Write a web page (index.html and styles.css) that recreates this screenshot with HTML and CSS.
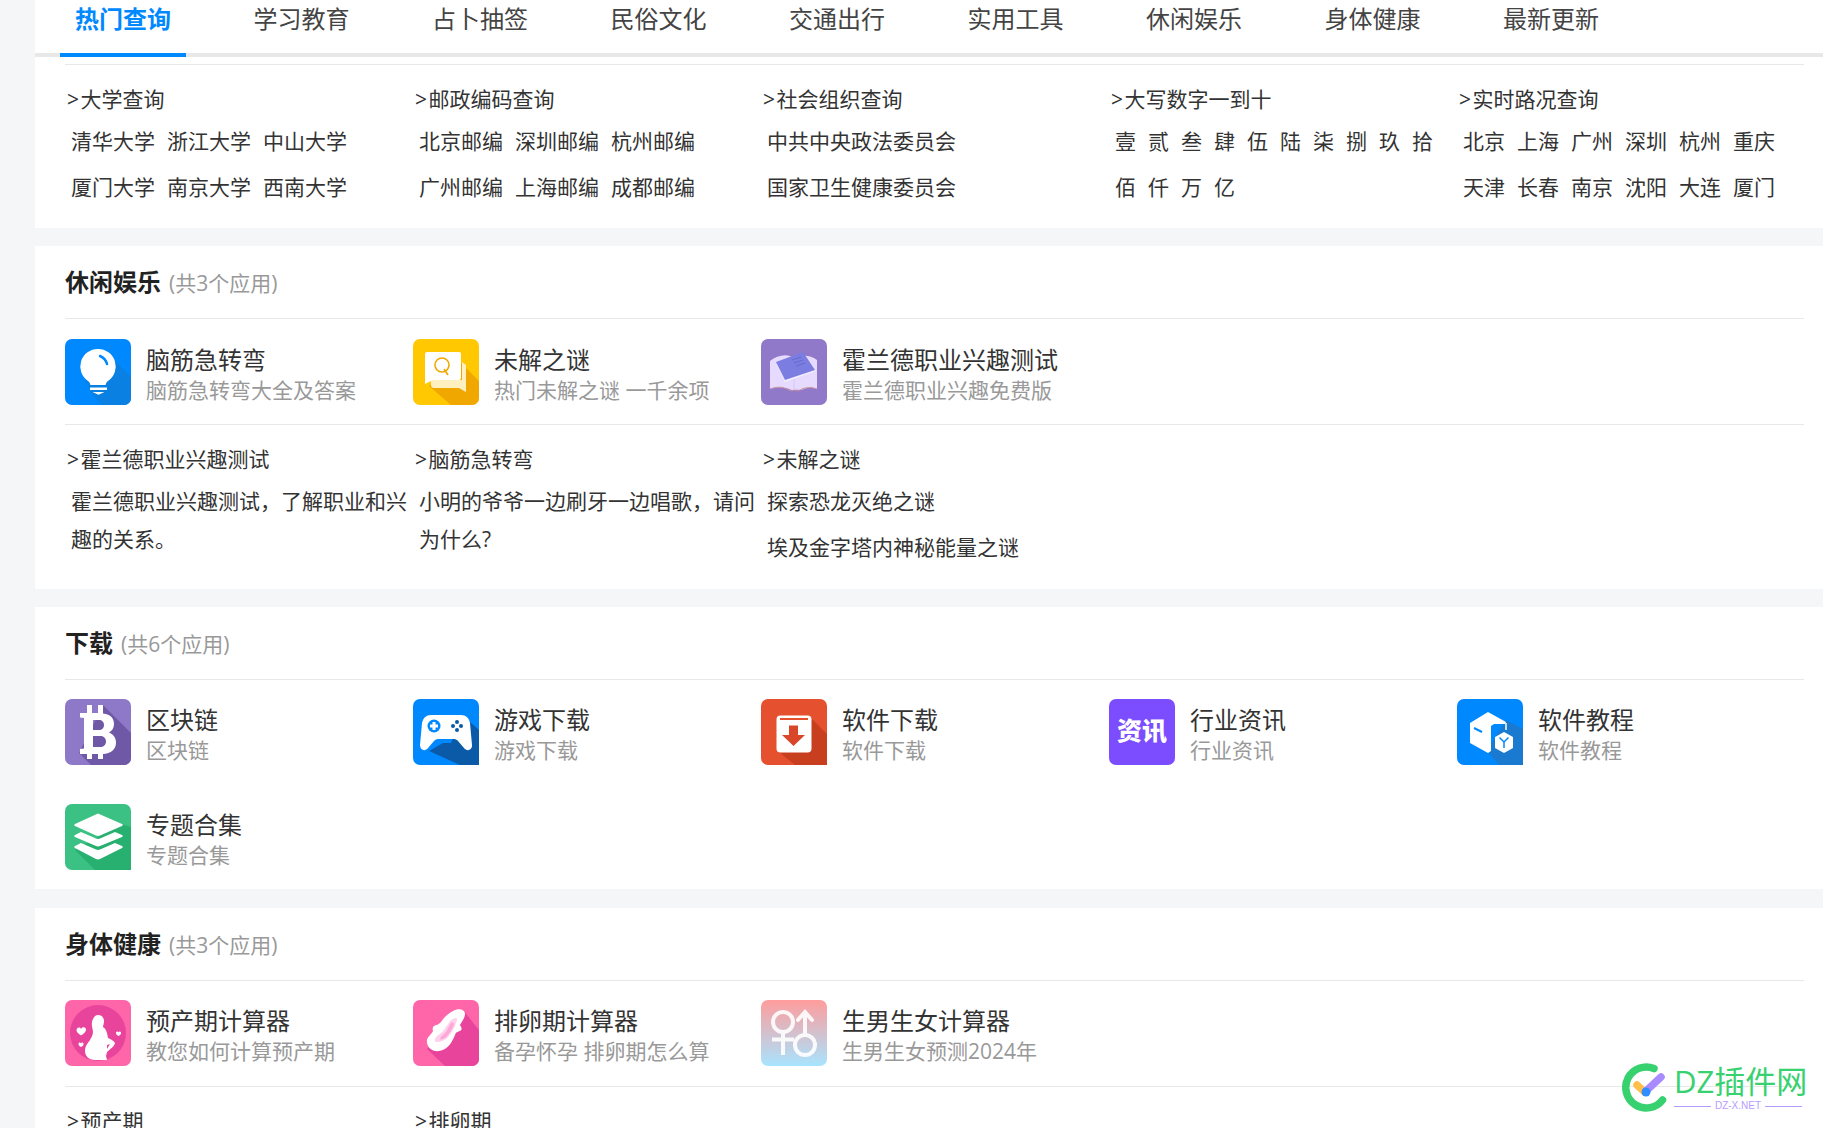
FILE: index.html
```html
<!DOCTYPE html>
<html lang="zh-CN">
<head>
<meta charset="utf-8">
<title>应用大全</title>
<link rel="stylesheet" href="styles.css">
</head>
<body>
<main class="page">
  <nav class="tabs">
    <a class="tab active">热门查询</a><a class="tab">学习教育</a><a class="tab">占卜抽签</a><a class="tab">民俗文化</a><a class="tab">交通出行</a><a class="tab">实用工具</a><a class="tab">休闲娱乐</a><a class="tab">身体健康</a><a class="tab">最新更新</a>
  </nav>

  <section class="panel first">
    <div class="links">
      <div class="col"><h4>&gt;大学查询</h4>
        <div class="row"><a>清华大学</a><a>浙江大学</a><a>中山大学</a></div>
        <div class="row"><a>厦门大学</a><a>南京大学</a><a>西南大学</a></div></div>
      <div class="col"><h4>&gt;邮政编码查询</h4>
        <div class="row"><a>北京邮编</a><a>深圳邮编</a><a>杭州邮编</a></div>
        <div class="row"><a>广州邮编</a><a>上海邮编</a><a>成都邮编</a></div></div>
      <div class="col"><h4>&gt;社会组织查询</h4>
        <div class="row"><a>中共中央政法委员会</a></div>
        <div class="row"><a>国家卫生健康委员会</a></div></div>
      <div class="col"><h4>&gt;大写数字一到十</h4>
        <div class="row"><a>壹</a><a>贰</a><a>叁</a><a>肆</a><a>伍</a><a>陆</a><a>柒</a><a>捌</a><a>玖</a><a>拾</a></div>
        <div class="row"><a>佰</a><a>仟</a><a>万</a><a>亿</a></div></div>
      <div class="col"><h4>&gt;实时路况查询</h4>
        <div class="row"><a>北京</a><a>上海</a><a>广州</a><a>深圳</a><a>杭州</a><a>重庆</a></div>
        <div class="row"><a>天津</a><a>长春</a><a>南京</a><a>沈阳</a><a>大连</a><a>厦门</a></div></div>
    </div>
  </section>

  <section class="panel fun">
    <header class="head"><h3>休闲娱乐</h3><span>(共3个应用)</span></header>
    <div class="apps">
      <div class="app">
        <svg class="icon" viewBox="0 0 66 66"><rect width="66" height="66" rx="7" fill="#0088ff"/><path d="M44 16 66 38V59a7 7 0 0 1-7 7H37L26 54 20 40z" fill="#0a80e2"/><path d="M33 10a17.500 17.500 0 0 0-10 32c2 1.500 2 3 2.500 4h15c.5-1 .5-2.500 2.500-4a17.500 17.500 0 0 0-10-32z" fill="#fff"/><path d="M25 48.500h17v2.500H25zM27.500 53h12l-6 2.800z" fill="#fff"/><path d="M35 17a12 12 0 0 1 7 8" fill="none" stroke="#0088ff" stroke-width="2.500" stroke-linecap="round"/></svg>
        <div class="info"><b>脑筋急转弯</b><small>脑筋急转弯大全及答案</small></div>
      </div>
      <div class="app">
        <svg class="icon" viewBox="0 0 66 66"><rect width="66" height="66" rx="7" fill="#ffc800"/><path d="M48 24 66 42V59a7 7 0 0 1-7 7H38L16 47z" fill="#f0a800"/><path d="M18 41h31V23l4 3v27l-7-4H21a3 3 0 0 1-3-3z" fill="#fff0c0"/><path d="M14 13h32a2 2 0 0 1 2 2v24a2 2 0 0 1-2 2H20l-8 4V15a2 2 0 0 1 2-2z" fill="#fff"/><circle cx="29" cy="26" r="7" fill="none" stroke="#f0a800" stroke-width="1.600"/><path d="M31 30l4 6" stroke="#f0a800" stroke-width="1.600"/></svg>
        <div class="info"><b>未解之谜</b><small>热门未解之谜 一千余项</small></div>
      </div>
      <div class="app">
        <svg class="icon" viewBox="0 0 66 66"><rect width="66" height="66" rx="7" fill="#9079c8"/><path d="M9 22c6-5 14-7 20-5 2 1 3 2 4 3 6-4 15-5 23 1v29c-5-2-9-2-13 0-2 1-3 1-5 1-2-.5-3-.5-5 0-2 0-3 0-5-1-5-2-12-2-19 0z" fill="#e6daff"/><path d="M9 50c6-2.500 13-2.500 19 1 3 1 3 1 5 0 3 1 4 1 6 0 5-3 12-3 17-1" fill="none" stroke="#c98f9f" stroke-width="1"/><path d="M33 22v28" stroke="#d3c4f0" stroke-width=".8"/><path d="M16 26 43 16l12 16-31 11z" fill="#f3eefc"/><path d="M15 23 42 13l12 18-30 10z" fill="#7b7ee0"/><path d="M31 21l9-3M33 24l9-3M35 27l9-3" stroke="#5f62c4" stroke-width=".7"/></svg>
        <div class="info"><b>霍兰德职业兴趣测试</b><small>霍兰德职业兴趣免费版</small></div>
      </div>
    </div>
    <div class="links">
      <div class="col"><h4>&gt;霍兰德职业兴趣测试</h4><div class="row"><a>霍兰德职业兴趣测试，了解职业和兴趣的关系。</a></div></div>
      <div class="col"><h4>&gt;脑筋急转弯</h4><div class="row"><a>小明的爷爷一边刷牙一边唱歌，请问为什么?</a></div></div>
      <div class="col"><h4>&gt;未解之谜</h4><div class="row"><a>探索恐龙灭绝之谜</a></div><div class="row"><a>埃及金字塔内神秘能量之谜</a></div></div>
    </div>
  </section>

  <section class="panel dl">
    <header class="head"><h3>下载</h3><span>(共6个应用)</span></header>
    <div class="apps">
      <div class="app">
        <svg class="icon" viewBox="0 0 66 66"><rect width="66" height="66" rx="7" fill="#8e78c8"/><path d="M38 6 66 34V59a7 7 0 0 1-7 7H26L14 54z" fill="#6f58a5"/><path fill-rule="evenodd" d="M22 6h5v8h6V6h5v8.500c8 1 11 5 11 10.500 0 4-2 7-5 8.500 4 1.500 7 5 7 10 0 7-5 11-13 11.500V60h-5v-5h-6v5h-5v-5H15v-5l4-.5V19l-4-.5V14h7zM28 21v10h6c3 0 5-2 5-5s-2-5-5-5zM28 37v11h7c3.500 0 6-2 6-5.500s-2.500-5.500-6-5.500z" fill="#fff"/></svg>
        <div class="info"><b>区块链</b><small>区块链</small></div>
      </div>
      <div class="app">
        <svg class="icon" viewBox="0 0 66 66"><rect width="66" height="66" rx="7" fill="#0088ff"/><path d="M50 17 66 31V66H47L16 52l14-8h8z" fill="#0a5aa8"/><path d="M18 16h30c5 0 8 3 9 8l2 22c.3 5-5 7-8 3l-6-7c-1-1-2-2-4-2H25c-2 0-3 1-4 2l-6 7c-3 4-8 2-8-3l2-22c1-5 4-8 9-8z" fill="#fff"/><circle cx="21" cy="27" r="6.500" fill="#0088ff"/><path d="M19.500 23h3v2.500H25v3h-2.500V31h-3v-2.500H17v-3h2.500z" fill="#fff"/><g fill="#0a5aa8"><circle cx="44" cy="23" r="2"/><circle cx="44" cy="31" r="2"/><circle cx="40" cy="27" r="2"/><circle cx="48" cy="27" r="2"/></g></svg>
        <div class="info"><b>游戏下载</b><small>游戏下载</small></div>
      </div>
      <div class="app">
        <svg class="icon" viewBox="0 0 66 66"><rect width="66" height="66" rx="7" fill="#e5502f"/><path d="M51 20 66 35V66H34L18 53z" fill="#c83f20"/><rect x="15.500" y="16.500" width="35" height="37" rx="4" fill="#fff"/><rect x="19" y="19" width="28" height="2" fill="#e5502f"/><path d="M28 26.500h9V36h7L32.500 47 21 36h7z" fill="#d9472a"/></svg>
        <div class="info"><b>软件下载</b><small>软件下载</small></div>
      </div>
      <div class="app">
        <svg class="icon" viewBox="0 0 66 66"><rect width="66" height="66" rx="7" fill="#7c4dff"/><text x="33" y="41" class="zixun" text-anchor="middle">资讯</text></svg>
        <div class="info"><b>行业资讯</b><small>行业资讯</small></div>
      </div>
      <div class="app">
        <svg class="icon" viewBox="0 0 66 66"><rect width="66" height="66" rx="7" fill="#0088ff"/><path d="M49 21 66 30V66H42L30 52z" fill="#1a7ad0"/><path d="M13 24 31 13l18 10-1 2-11 0-3 2v25l-3 2-18-10z" fill="#fff"/><path d="M17 29l8 4" stroke="#0088ff" stroke-width="2"/><path d="M38 38l9-5 9 5v11l-9 5-9-5z" fill="#fff"/><path d="M42.500 38.500 47 43l4.500-4.500M47 43v6" fill="none" stroke="#0088ff" stroke-width="1.500"/><path d="M49 24v7" stroke="#fff" stroke-width="1.500"/></svg>
        <div class="info"><b>软件教程</b><small>软件教程</small></div>
      </div>
      <div class="app">
        <svg class="icon" viewBox="0 0 66 66"><rect width="66" height="66" rx="7" fill="#3ac183"/><path d="M56 20 66 23V66H30L10 46z" fill="#28b070"/><path d="M33 9.500 57 20c1 .5 1 1.500 0 2L35 31.500c-1.300.6-2.700.6-4 0L10 22c-1-.5-1-1.500 0-2z" fill="#fff"/><path d="M16 28l15 6.500c1.300.6 2.700.6 4 0L50 28l7 3c1 .5 1 1.500 0 2L35 42c-1.300.6-2.700.6-4 0L10 33c-1-.5-1-1.500 0-2z" fill="#fff"/><path d="M16 39l15 6.500c1.300.6 2.700.6 4 0L50 39l7 3c1 .5 1 1.500 0 2L35 55c-1.300.6-2.700.6-4 0L10 44c-1-.5-1-1.500 0-2z" fill="#fff"/></svg>
        <div class="info"><b>专题合集</b><small>专题合集</small></div>
      </div>
    </div>
  </section>

  <section class="panel health">
    <header class="head"><h3>身体健康</h3><span>(共3个应用)</span></header>
    <div class="apps">
      <div class="app">
        <svg class="icon" viewBox="0 0 66 66"><rect width="66" height="66" rx="7" fill="#ff66aa"/><circle cx="33" cy="33" r="28" fill="#e8449c"/><path d="M33 15c4 0 6 3 6 6 0 3-1 4-1 6 2 1 3 3 4 6l1 5c3 1 6 3 7 5 0 2-4 6-8 9l-1 4 1 4H30c-6 0-10-4-10-9 0-5 3-8 5-11 1-2 3-5 3-8 0-2-1-4-1-6-1-5 2-11 6-11z" fill="#fff"/><path d="M42 45l3-1-3 5z" fill="#e8449c"/><g fill="#fff"><path d="M16 35.500c-3-2-4.500-3.500-4.500-5.500 0-2.500 3.500-3.500 4.500-1 1-2.500 5-2 5 .5 0 2.500-2 4-5 6z"/><path d="M16 47c-2-1-2.500-2-2.500-3 0-1.500 2-2 2.500-.5.500-1.500 2.500-1 2.500.5 0 1-.5 2-2.500 3z"/><path d="M53.500 36c-2-1-2.500-2-2.500-3 0-1.500 2-2 2.500-.5.500-1.500 2.500-1 2.500.5 0 1-.5 2-2.500 3z"/></g></svg>
        <div class="info"><b>预产期计算器</b><small>教您如何计算预产期</small></div>
      </div>
      <div class="app">
        <svg class="icon" viewBox="0 0 66 66"><rect width="66" height="66" rx="7" fill="#ff66aa"/><path d="M50 10 66 30V59a7 7 0 0 1-7 7H32L14 49z" fill="#e8449c"/><path d="M40 11c5-3 12-2 12 3 0 4-3 7-5 11 1 2 3 4 0 6-3 1-4 1-5 4-3 7-7 15-16 16-7 1-13-4-12-11 1-4 5-6 6-9-1-3 0-5 3-6 2 0 3-1 5-3 3-5 7-8 12-11z" fill="#fff"/><path d="M38 20c3-2 7-3 6 0-1 5-6 15-11 19-4 3-10 4-11 2-1-3 3-6 6-8 4-3 7-10 10-13z" fill="#ffd2ec"/><path d="M38 23c2-1 3 0 3 1-1 4-5 11-9 14-2 1-5 2-5 1 0-2 3-4 5-6 3-3 4-8 6-10z" fill="#ffa6d8"/></svg>
        <div class="info"><b>排卵期计算器</b><small>备孕怀孕 排卵期怎么算</small></div>
      </div>
      <div class="app">
        <svg class="icon" viewBox="0 0 66 66"><defs><linearGradient id="sex" x1="0" y1="0" x2="0" y2="1"><stop offset="0" stop-color="#ff9c9c"/><stop offset="1" stop-color="#a8e4ff"/></linearGradient></defs><rect width="66" height="66" rx="7" fill="url(#sex)"/><g fill="none" stroke="#fff" stroke-width="4" opacity=".9"><circle cx="22" cy="22" r="10"/><path d="M22 32v23M11 39.500h22"/><circle cx="44" cy="45" r="10"/><path d="M44 35V12M37 20l7-8 7 8" stroke-linecap="round"/></g></svg>
        <div class="info"><b>生男生女计算器</b><small>生男生女预测2024年</small></div>
      </div>
    </div>
    <div class="links">
      <div class="col"><h4>&gt;预产期</h4></div>
      <div class="col"><h4>&gt;排卵期</h4></div>
    </div>
  </section>
</main>

<aside class="mark">
  <svg class="mark-icon" viewBox="0 0 50 50"><path d="M34 5.500A20.500 20.500 0 1 0 42.500 37" fill="none" stroke="#37d16f" stroke-width="7.500" stroke-linecap="round"/><path d="M17 22l7 6.500" stroke="#ffbf4d" stroke-width="7.500" stroke-linecap="round"/><path d="M26 28 41 14" stroke="#a98bff" stroke-width="7.500" stroke-linecap="round"/><circle cx="26" cy="29" r="4.500" fill="#2f8dff"/></svg>
  <div class="mark-text"><strong>DZ插件网</strong><em>DZ-X.NET</em></div>
</aside>
</body>
</html>
```
FILE: styles.css
```css
* { box-sizing: border-box; }
html, body { margin: 0; height: 100%; }
body {
  height: 1128px;
  overflow: hidden;
  background: #f5f6f8;
  font-family: "Open Sans", "Noto Sans CJK SC", sans-serif;
  color: #333;
  position: relative;
}
.page { margin-left: 35px; }
.tabs {
  display: flex;
  height: 57px;
  padding-left: 25px;
  background: #fff;
  border-bottom: 4px solid #e8e8e8;
}
.tab {
  flex: none;
  width: 126px;
  height: 57px;
  margin-right: 52.5px;
  font-size: 24px;
  line-height: 37px;
  text-align: center;
  color: #444;
}
.tab.active {
  color: #0088ff;
  font-weight: 700;
  border-bottom: 4px solid #0088ff;
}
.panel {
  background: #fff;
  margin-bottom: 18px;
  padding: 0 19px 0 30px;
}
.panel.first { padding-top: 7px; }
.panel.dl { margin-bottom: 19px; }
.head {
  display: flex;
  align-items: baseline;
  gap: 8px;
  height: 73px;
  padding-top: 18px;
  border-bottom: 1px solid #e8e8e8;
}
.head h3 { margin: 0; font-size: 24px; line-height: 36px; font-weight: 700; color: #222; }
.head span { font-size: 21px; color: #999; }
.apps {
  display: grid;
  grid-template-columns: repeat(5, 348px);
  row-gap: 39px;
  padding: 19px 0;
}
.fun .apps { padding-top: 20px; }
.health .apps { padding-bottom: 20px; }
.app { display: flex; gap: 15px; height: 66px; }
.icon { flex: none; width: 66px; height: 66px; display: block; }
.info { display: flex; flex-direction: column; padding-top: 6px; white-space: nowrap; }
.info b { font-size: 24px; line-height: 30px; font-weight: 400; color: #333; }
.info small { font-size: 21px; line-height: 30px; color: #999; }
.zixun { font-size: 25px; font-weight: 900; fill: #fff; }
.links {
  display: grid;
  grid-template-columns: repeat(5, 348px);
  border-top: 1px solid #e8e8e8;
  padding: 15px 0 15px;
}
.first .links { padding-bottom: 14px; }
.col { padding-right: 5px; }
.col h4 {
  margin: 0 0 4px 2px;
  font-size: 21px;
  line-height: 38px;
  font-weight: 400;
  color: #333;
}
.col h4::first-letter { margin-right: 1.5px; }
.row {
  display: flex;
  gap: 12px;
  padding-left: 6px;
  margin-bottom: 8px;
  font-size: 21px;
  line-height: 38px;
  color: #333;
}
.mark {
  position: absolute;
  left: 1620px;
  top: 1062px;
  display: flex;
  gap: 4px;
}
.mark-icon { width: 50px; height: 50px; display: block; margin-top: 1px; }
.mark-text { display: flex; flex-direction: column; width: 128px; }
.mark-text strong {
  font-size: 31px;
  line-height: 38px;
  font-weight: 400;
  color: #37d16f;
  white-space: nowrap;
}
.mark-text em {
  display: flex;
  align-items: center;
  gap: 4px;
  font-family: "Liberation Sans", sans-serif;
  font-style: normal;
  font-size: 10px;
  line-height: 12px;
  color: #b79cff;
}
.mark-text em::before, .mark-text em::after {
  content: "";
  flex: 1;
  height: 1px;
  background: #b79cff;
}
```
